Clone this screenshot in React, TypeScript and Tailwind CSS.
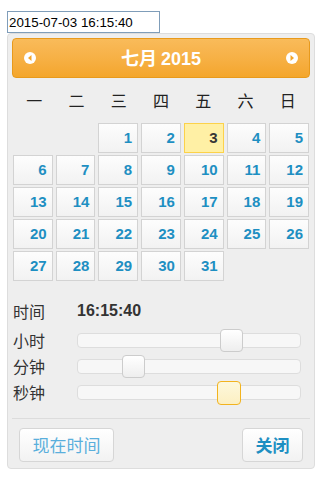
import React from "react";

const cjk = { fontFamily: '"Noto Sans CJK SC", "Noto Sans", sans-serif' };
const num = { fontFamily: '"Liberation Sans", Arial, sans-serif' };

const weekdays = ["一", "二", "三", "四", "五", "六", "日"];

function ArrowCircle({ dir }: { dir: "left" | "right" }) {
  return (
    <svg width="12" height="12" viewBox="0 0 12 12">
      <circle cx="6" cy="6" r="6" fill="#ffffff" />
      {dir === "left" ? (
        <polygon points="7.5,3 4,6 7.5,9" fill="#f4a52a" />
      ) : (
        <polygon points="4.5,3 8,6 4.5,9" fill="#f4a52a" />
      )}
    </svg>
  );
}

function Slider({ label, value, max, active }: { label: string; value: number; max: number; active?: boolean }) {
  return (
    <div className="flex h-[26px] items-center">
      <div className="w-[64px] text-[16px] text-[#333333]" style={cjk}>
        {label}
      </div>
      <div className="relative h-[15px] w-[224px] rounded-[4px] border border-[#dddddd] bg-[#f7f7f7]">
        <div
          className={
            active
              ? "absolute top-[-5px] h-[24px] w-[24px] rounded-[4px] border border-[#f2b31f] bg-gradient-to-b from-[#fdf8dc] to-[#fcefc2]"
              : "absolute top-[-5px] h-[23px] w-[23px] rounded-[4px] border border-[#cccccc] bg-gradient-to-b from-[#ffffff] to-[#eeeeee]"
          }
          style={{ left: `calc(${(value / max) * 100}% - 12px)` }}
        />
      </div>
    </div>
  );
}

export default function App() {
  // July 2015 starts on a Wednesday; week starts Monday
  const days: (number | null)[] = [null, null];
  for (let d = 1; d <= 31; d++) days.push(d);

  return (
    <div className="min-h-[479px] bg-white pl-[7px] pt-[11px]">
      <input
        readOnly
        value="2015-07-03 16:15:40"
        className="block h-[22px] w-[153px] border border-[#7f9db9] px-[1px] text-[13.33px] text-black outline-none"
        style={num}
      />
      <div className="w-[308px] rounded-[4px] border border-[#dddddd] bg-[#eeeeee] p-[4px]">
        <div className="flex h-[40px] items-center justify-between rounded-[4px] border border-[#e89a1c] bg-gradient-to-b from-[#f9bb5a] to-[#f4a62b] px-[11px]">
          <ArrowCircle dir="left" />
          <div className="flex items-baseline gap-[4px] text-[18px] font-bold text-white">
            <span style={cjk}>七月</span>
            <span style={num}>2015</span>
          </div>
          <ArrowCircle dir="right" />
        </div>

        <div className="grid h-[44px] grid-cols-7 items-center px-[1px] text-[16px] text-[#222222]" style={cjk}>
          {weekdays.map((w) => (
            <div key={w} className="text-center">
              {w}
            </div>
          ))}
        </div>

        <div className="mt-[1px] grid grid-cols-7 gap-x-[3px] gap-y-[2px] px-[1px]">
          {days.map((d, i) =>
            d === null ? (
              <div key={"e" + i} className="h-[30px]" />
            ) : d === 3 ? (
              <div
                key={d}
                className="flex h-[30px] items-center justify-end border border-[#fcd24a] bg-[#fff0a5] pr-[5px] text-[15px] font-bold text-[#363636]"
                style={num}
              >
                {d}
              </div>
            ) : (
              <div
                key={d}
                className="flex h-[30px] items-center justify-end border border-[#d3d3d3] bg-gradient-to-b from-[#fdfdfd] to-[#f2f2f2] pr-[5px] text-[15px] font-bold text-[#1e8fc2]"
                style={num}
              >
                {d}
              </div>
            )
          )}
        </div>

        <div className="mt-[17px] pl-[1px]">
          <div className="flex h-[26px] items-center">
            <div className="w-[64px] text-[16px] text-[#333333]" style={cjk}>
              时间
            </div>
            <div className="text-[16px] font-bold text-[#333333]" style={num}>
              16:15:40
            </div>
          </div>
          <div className="mt-[3px]">
            <Slider label="小时" value={16} max={23} />
            <Slider label="分钟" value={15} max={59} />
            <Slider label="秒钟" value={40} max={59} active />
          </div>
        </div>

        <div className="mt-[13px] border-t border-[#dcdcdc]" />

        <div className="mb-[2px] mt-[9px] flex justify-between px-[7px]">
          <button
            className="h-[34px] w-[95px] rounded-[4px] border border-[#d6d6d6] bg-gradient-to-b from-[#ffffff] to-[#f2f2f2] text-[17px] text-[#5aafdc]"
            style={cjk}
          >
            现在时间
          </button>
          <button
            className="h-[34px] w-[61px] rounded-[4px] border border-[#d6d6d6] bg-gradient-to-b from-[#ffffff] to-[#f2f2f2] text-[17px] font-semibold text-[#1e8fc2]"
            style={cjk}
          >
            关闭
          </button>
        </div>
      </div>
    </div>
  );
}
